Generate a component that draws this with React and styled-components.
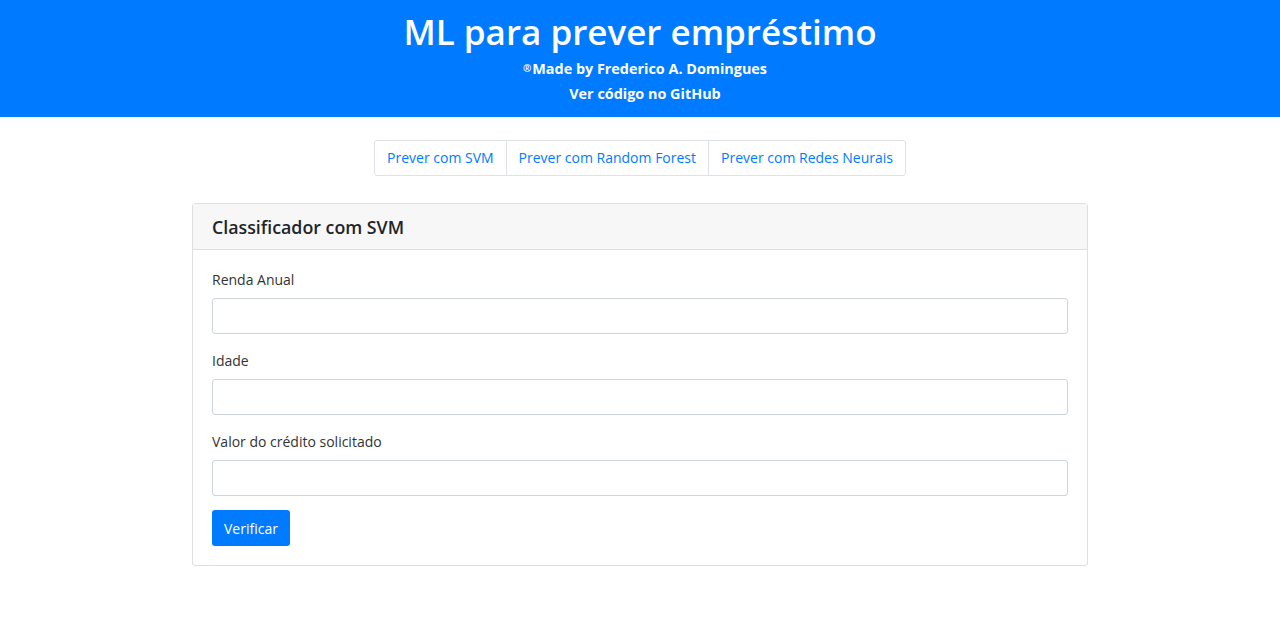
import React from 'react'
import styled, { createGlobalStyle } from 'styled-components'

const GlobalStyle = createGlobalStyle`
  body {
    margin: 0;
    background: #fff;
    font-family: 'Open Sans', 'Noto Sans', sans-serif;
    color: #212529;
  }
`

const Header = styled.header`
  background-color: #007bff;
  color: #fff;
  height: 117px;
  box-sizing: border-box;
  padding-top: 8px;
  display: flex;
  flex-direction: column;
  align-items: center;
`
const Title = styled.h1`
  margin: 0;
  font-size: 35px;
  font-weight: 600;
  line-height: 48px;
`
const Sub = styled.p`
  margin: 0;
  padding-left: 10px;
  font-size: 14.4px;
  font-weight: 700;
  line-height: 25px;

  sup {
    font-size: 10px;
    vertical-align: 2px;
    margin-right: 1px;
  }
`
const Main = styled.main`
  display: flex;
  flex-direction: column;
  align-items: center;
  padding-top: 23px;
`
const Tabs = styled.nav`
  display: flex;
  border: 1px solid #dee2e6;
  border-radius: 3px;
  margin-bottom: 27px;
`
const Tab = styled.a`
  display: block;
  padding: 0 12px;
  height: 34px;
  line-height: 34px;
  font-size: 14px;
  color: #007bff;
  text-decoration: none;
  cursor: pointer;

  & + & {
    border-left: 1px solid #dee2e6;
  }
`
const Card = styled.section`
  width: 896px;
  box-sizing: border-box;
  border: 1px solid #dfdfdf;
  border-radius: 3px;
`
const CardHeader = styled.div`
  background: #f7f7f7;
  border-bottom: 1px solid #dfdfdf;
  height: 46px;
  box-sizing: border-box;
  padding: 0 19px;
  display: flex;
  align-items: center;
  font-size: 17.8px;
  font-weight: 600;
`
const CardBody = styled.form`
  padding: 19px 19px 19px;
`
const Group = styled.div`
  margin-bottom: ${(p) => (p.last ? '14px' : '16px')};
`
const Label = styled.label`
  display: block;
  font-size: 14px;
  line-height: 21px;
  margin-bottom: 8px;
  color: #333;
`
const Input = styled.input`
  display: block;
  width: 100%;
  box-sizing: border-box;
  height: 36px;
  border: 1px solid #ced4da;
  border-radius: 3px;
  outline: none;
  font-size: 14px;
  padding: 0 12px;
`
const Button = styled.button`
  height: 36px;
  padding: 0 12px;
  background: #007bff;
  color: #fff;
  border: none;
  border-radius: 3px;
  font-family: inherit;
  font-size: 14px;
  cursor: pointer;
`

function App() {
  return (
    <>
      <GlobalStyle />
      <Header>
        <Title>ML para prever empréstimo</Title>
        <Sub>
          <sup>®</sup>Made by Frederico A. Domingues
        </Sub>
        <Sub>Ver código no GitHub</Sub>
      </Header>
      <Main>
        <Tabs>
          <Tab>Prever com SVM</Tab>
          <Tab>Prever com Random Forest</Tab>
          <Tab>Prever com Redes Neurais</Tab>
        </Tabs>
        <Card>
          <CardHeader>Classificador com SVM</CardHeader>
          <CardBody onSubmit={(e) => e.preventDefault()}>
            <Group>
              <Label>Renda Anual</Label>
              <Input type='text' />
            </Group>
            <Group>
              <Label>Idade</Label>
              <Input type='text' />
            </Group>
            <Group last>
              <Label>Valor do crédito solicitado</Label>
              <Input type='text' />
            </Group>
            <Button type='submit'>Verificar</Button>
          </CardBody>
        </Card>
      </Main>
    </>
  )
}

export default App
